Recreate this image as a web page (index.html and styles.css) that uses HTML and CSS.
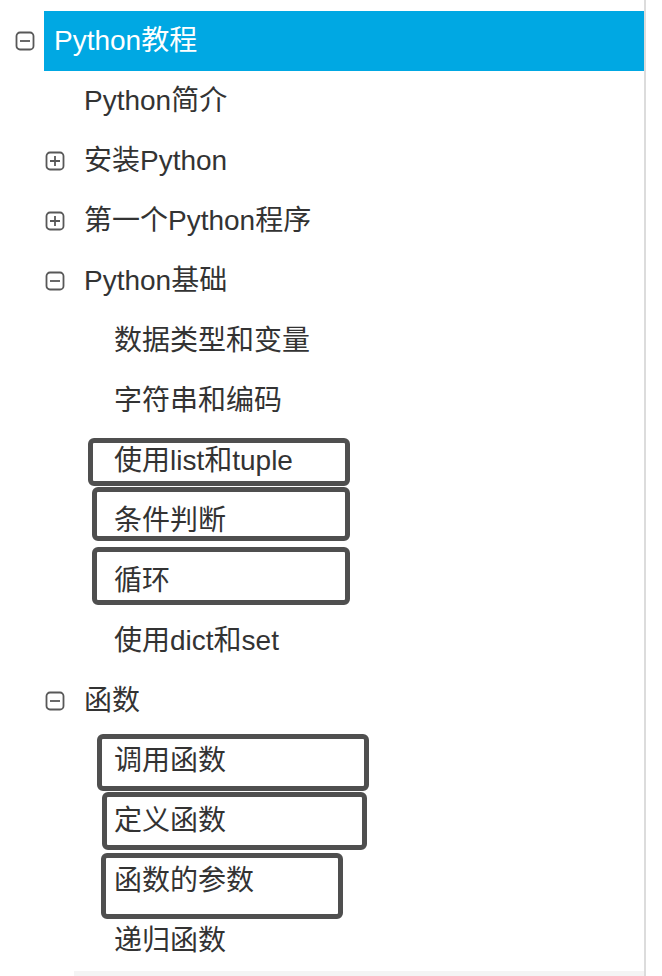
FILE: index.html
```html
<!DOCTYPE html>
<html lang="zh-CN">
<head>
<meta charset="utf-8">
<title>Python教程</title>
<link rel="stylesheet" href="styles.css">
</head>
<body>
<div class="page">
  <nav class="tree">
    <div class="row lvl0">
      <span class="toggle"><svg viewBox="0 0 20 20" width="20" height="20"><rect x="1.5" y="1.5" width="17" height="17" rx="3.5" fill="none" stroke="#585858" stroke-width="1.8"/><path d="M5 10h10" stroke="#585858" stroke-width="1.8"/></svg></span>
      <span class="label active">Python教程</span>
    </div>
    <div class="row lvl1">
      <span class="toggle"></span>
      <span class="label">Python简介</span>
    </div>
    <div class="row lvl1">
      <span class="toggle"><svg viewBox="0 0 20 20" width="20" height="20"><rect x="1.5" y="1.5" width="17" height="17" rx="3.5" fill="none" stroke="#585858" stroke-width="1.8"/><path d="M5 10h10M10 5v10" stroke="#585858" stroke-width="1.8"/></svg></span>
      <span class="label">安装Python</span>
    </div>
    <div class="row lvl1">
      <span class="toggle"><svg viewBox="0 0 20 20" width="20" height="20"><rect x="1.5" y="1.5" width="17" height="17" rx="3.5" fill="none" stroke="#585858" stroke-width="1.8"/><path d="M5 10h10M10 5v10" stroke="#585858" stroke-width="1.8"/></svg></span>
      <span class="label">第一个Python程序</span>
    </div>
    <div class="row lvl1">
      <span class="toggle"><svg viewBox="0 0 20 20" width="20" height="20"><rect x="1.5" y="1.5" width="17" height="17" rx="3.5" fill="none" stroke="#585858" stroke-width="1.8"/><path d="M5 10h10" stroke="#585858" stroke-width="1.8"/></svg></span>
      <span class="label">Python基础</span>
    </div>
    <div class="row lvl2"><span class="toggle"></span><span class="label">数据类型和变量</span></div>
    <div class="row lvl2"><span class="toggle"></span><span class="label">字符串和编码</span></div>
    <div class="row lvl2"><span class="toggle"></span><span class="label">使用list和tuple</span></div>
    <div class="row lvl2"><span class="toggle"></span><span class="label">条件判断</span></div>
    <div class="row lvl2"><span class="toggle"></span><span class="label">循环</span></div>
    <div class="row lvl2"><span class="toggle"></span><span class="label">使用dict和set</span></div>
    <div class="row lvl1">
      <span class="toggle"><svg viewBox="0 0 20 20" width="20" height="20"><rect x="1.5" y="1.5" width="17" height="17" rx="3.5" fill="none" stroke="#585858" stroke-width="1.8"/><path d="M5 10h10" stroke="#585858" stroke-width="1.8"/></svg></span>
      <span class="label">函数</span>
    </div>
    <div class="row lvl2"><span class="toggle"></span><span class="label">调用函数</span></div>
    <div class="row lvl2"><span class="toggle"></span><span class="label">定义函数</span></div>
    <div class="row lvl2"><span class="toggle"></span><span class="label">函数的参数</span></div>
    <div class="row lvl2"><span class="toggle"></span><span class="label">递归函数</span></div>
    <div class="next-row"></div>
  </nav>
  <div class="mark mark-1"></div>
  <div class="mark mark-2"></div>
  <div class="mark mark-3"></div>
  <div class="mark mark-4"></div>
  <div class="mark mark-5"></div>
  <div class="mark mark-6"></div>
</div>
</body>
</html>
```

FILE: styles.css
```css
html, body {
  margin: 0;
  padding: 0;
  background: #fff;
}
body {
  font-family: "Liberation Sans", Arial, "Noto Sans CJK SC", sans-serif;
  color: #333;
}
.page {
  position: relative;
  width: 662px;
  height: 976px;
  overflow: hidden;
}
.tree {
  width: 644px;
  height: 976px;
  border-right: 2px solid #dcdcdc;
  padding-top: 11px;
  box-sizing: content-box;
  display: flex;
  flex-direction: column;
}
.row {
  display: flex;
  align-items: stretch;
  height: 60px;
  flex: none;
}
.lvl1 { margin-left: 30px; }
.lvl2 { margin-left: 60px; }
.toggle {
  width: 44px;
  flex: none;
  display: flex;
  align-items: center;
  justify-content: flex-start;
  padding-left: 15px;
  box-sizing: border-box;
}
.toggle svg { display: block; flex: none; }
.label {
  flex: 1;
  display: flex;
  align-items: center;
  padding-left: 10px;
  font-size: 28px;
  line-height: 60px;
  white-space: nowrap;
}
.label.active {
  background: #00a8e3;
  color: #fff;
}
.next-row {
  margin-left: 74px;
  height: 20px;
  background: #f4f4f4;
  flex: none;
}
.mark {
  position: absolute;
  border: 5px solid #4f4f4f;
  border-radius: 6px;
  box-sizing: border-box;
}
.mark-1 { left: 88px; top: 438px; width: 262px; height: 48px; }
.mark-2 { left: 92px; top: 487px; width: 258px; height: 54px; }
.mark-3 { left: 92px; top: 547px; width: 258px; height: 58px; }
.mark-4 { left: 97px; top: 734px; width: 272px; height: 57px; }
.mark-5 { left: 102px; top: 792px; width: 265px; height: 58px; }
.mark-6 { left: 101px; top: 853px; width: 242px; height: 66px; }
```
